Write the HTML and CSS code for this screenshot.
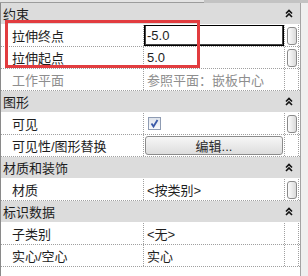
FILE: index.html
```html
<!DOCTYPE html>
<html lang="zh-CN">
<head>
  <meta charset="UTF-8">
  <title>属性</title>
  <link rel="stylesheet" href="styles.css">
</head>
<body>
  <div class="palette">
    <div class="topbar"><span class="tab"></span><span class="rest"></span></div>

    <div class="main">
      <div class="grid">
        <!-- 约束 -->
        <div class="group">
          <span>约束</span>
          <svg class="fold" width="8" height="9" viewBox="0 0 8 9"><path d="M1 4.5 L4 1.5 L7 4.5 M1 8 L4 5 L7 8" fill="none" stroke="#111" stroke-width="1.6"/></svg>
        </div>
        <div class="row">
          <div class="label">拉伸终点</div>
          <div class="value edit"><div class="input">-5.0</div></div>
          <div class="assoc"><span class="btn"></span></div>
        </div>
        <div class="row">
          <div class="label">拉伸起点</div>
          <div class="value">5.0</div>
          <div class="assoc"><span class="btn"></span></div>
        </div>
        <div class="row">
          <div class="label muted">工作平面</div>
          <div class="value muted">参照平面：嵌板中心</div>
          <div class="assoc"></div>
        </div>

        <!-- 图形 -->
        <div class="group">
          <span>图形</span>
          <svg class="fold" width="8" height="9" viewBox="0 0 8 9"><path d="M1 4.5 L4 1.5 L7 4.5 M1 8 L4 5 L7 8" fill="none" stroke="#111" stroke-width="1.6"/></svg>
        </div>
        <div class="row">
          <div class="label">可见</div>
          <div class="value">
            <span class="check"><svg width="11" height="11" viewBox="0 0 11 11"><path d="M2.5 5.5 L4.5 8.5 L8.5 2" fill="none" stroke="#3b5aa8" stroke-width="1.8"/></svg></span>
          </div>
          <div class="assoc"><span class="btn"></span></div>
        </div>
        <div class="row">
          <div class="label">可见性/图形替换</div>
          <div class="value button-cell"><div class="button">编辑...</div></div>
          <div class="assoc"></div>
        </div>

        <!-- 材质和装饰 -->
        <div class="group">
          <span>材质和装饰</span>
          <svg class="fold" width="8" height="9" viewBox="0 0 8 9"><path d="M1 4.5 L4 1.5 L7 4.5 M1 8 L4 5 L7 8" fill="none" stroke="#111" stroke-width="1.6"/></svg>
        </div>
        <div class="row">
          <div class="label">材质</div>
          <div class="value">&lt;按类别&gt;</div>
          <div class="assoc"><span class="btn"></span></div>
        </div>

        <!-- 标识数据 -->
        <div class="group">
          <span>标识数据</span>
          <svg class="fold" width="8" height="9" viewBox="0 0 8 9"><path d="M1 4.5 L4 1.5 L7 4.5 M1 8 L4 5 L7 8" fill="none" stroke="#111" stroke-width="1.6"/></svg>
        </div>
        <div class="row">
          <div class="label">子类别</div>
          <div class="value">&lt;无&gt;</div>
          <div class="assoc"></div>
        </div>
        <div class="row">
          <div class="label">实心/空心</div>
          <div class="value">实心</div>
          <div class="assoc"></div>
        </div>

        <div class="filler"></div>
      </div>
      <div class="edge"></div>
    </div>

    <!-- highlight annotation -->
    <div class="mark"></div>
  </div>
</body>
</html>
```

FILE: styles.css
```css
/* Page */
body {
  margin: 0;
  font-family: "Liberation Sans", "Noto Sans CJK SC", sans-serif;
  font-size: 13px;
  color: #1e1e1e;
  background: #fff;
  overflow: hidden;
}

.palette {
  position: relative;
  width: 308px;
  height: 276px;
  display: flex;
  flex-direction: column;
}

/* Strip left over from the toolbar above */
.topbar {
  height: 3px;
  display: flex;
  flex: none;
}

.topbar .tab {
  width: 204px;
  background: #e4e4e4;
  border-bottom: 1px solid #9c9c9c;
  box-sizing: border-box;
}

.topbar .rest {
  flex: 1;
  background: #c3c3c3;
}

.main {
  flex: 1;
  display: flex;
}

/* Property grid */
.grid {
  width: 300px;
  border-left: 1px solid #8a8a8a;
  box-sizing: border-box;
  display: flex;
  flex-direction: column;
  background: #fff;
}

.edge {
  flex: 1;
  border-left: 1px solid #a3a3a3;
  background: #efefef;
}

.group {
  height: 22px;
  flex: none;
  box-sizing: border-box;
  background: #dcdcdc;
  border-bottom: 1px solid #fff;
  display: flex;
  align-items: center;
  justify-content: space-between;
  padding: 0 7px 0 2px;
}

.fold {
  display: block;
}

.row {
  height: 22px;
  flex: none;
  box-sizing: border-box;
  display: grid;
  grid-template-columns: 143px 141px 14px;
  border-bottom: 1px dotted #a0a0a0;
}

.label {
  padding-left: 11px;
  border-right: 1px dotted #a0a0a0;
  display: flex;
  align-items: center;
  white-space: nowrap;
}

.value {
  padding-left: 3px;
  border-right: 1px dotted #a0a0a0;
  display: flex;
  align-items: center;
  white-space: nowrap;
}

.muted {
  color: #8e8e8e;
}

.assoc {
  border-right: 1px dotted #a0a0a0;
  display: flex;
  align-items: center;
}

.filler {
  flex: 1;
}

/* Active text box */
.value.edit {
  padding: 0;
}

.input {
  width: 100%;
  height: 100%;
  box-sizing: border-box;
  border: 1px solid #000;
  box-shadow: inset 1px 0 0 #444, inset -1px -1px 0 #444;
  padding-left: 2px;
  display: flex;
  align-items: center;
  background: #fff;
}

/* Associate-parameter buttons */
.btn {
  display: block;
  width: 10px;
  height: 18px;
  margin-left: 2px;
  box-sizing: border-box;
  border: 1px solid #8a8a8a;
  border-radius: 3px;
  background: linear-gradient(to right, #fdfdfd, #dadada);
}

/* Checkbox */
.check {
  width: 13px;
  height: 13px;
  box-sizing: border-box;
  border: 1px solid #8f9cb3;
  background: linear-gradient(#dfe4ec, #f8f9fb);
  display: flex;
  align-items: center;
  justify-content: center;
  margin-left: 1px;
}

/* Edit button */
.value.button-cell {
  padding: 1px 1px 1px 1px;
}

.button {
  width: 100%;
  height: 19px;
  box-sizing: border-box;
  border: 1px solid #8c8c8c;
  border-radius: 3px;
  background: linear-gradient(#f7f7f7, #dddddd);
  display: flex;
  align-items: center;
  justify-content: center;
  color: #2a2a2a;
}

/* Red highlight drawn over the first two rows */
.mark {
  position: absolute;
  left: 5px;
  top: 20px;
  width: 195px;
  height: 48px;
  box-sizing: border-box;
  border: 3px solid #e23c3f;
}
```
